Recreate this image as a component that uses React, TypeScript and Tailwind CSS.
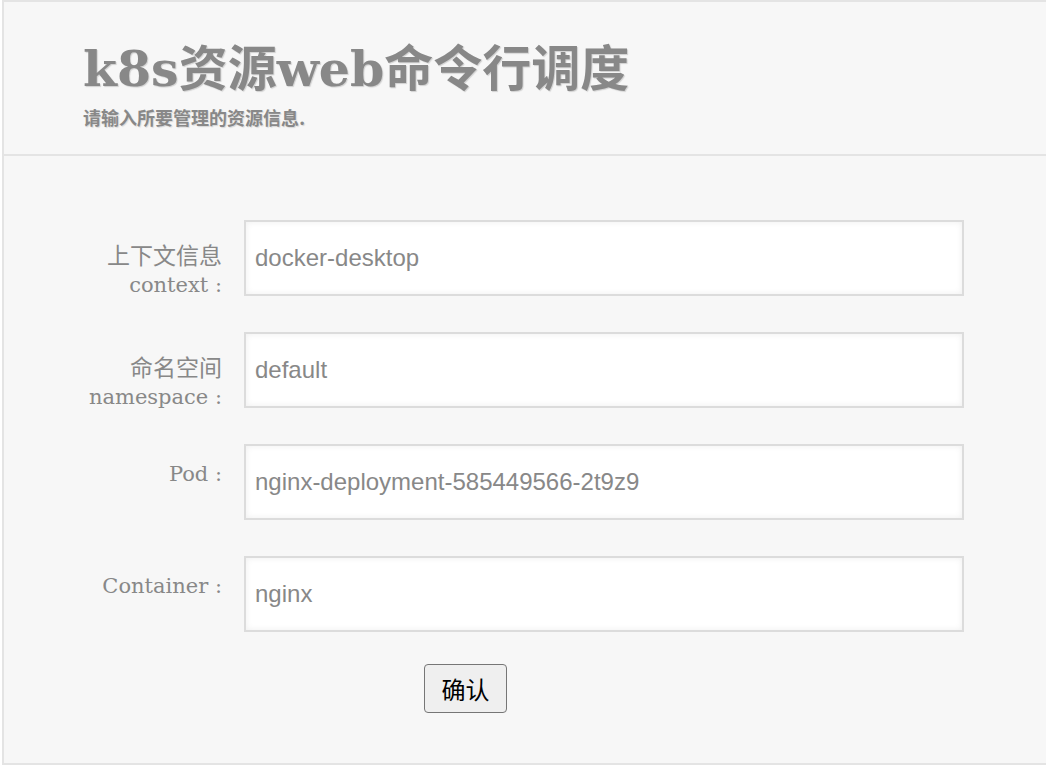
import { useState } from "react";

type Field = {
    key: string;
    cn?: string;
    en: string;
    value: string;
};

const fields: Field[] = [
    { key: "context", cn: "上下文信息", en: "context :", value: "docker-desktop" },
    { key: "namespace", cn: "命名空间", en: "namespace :", value: "default" },
    { key: "pod", en: "Pod :", value: "nginx-deployment-585449566-2t9z9" },
    { key: "container", en: "Container :", value: "nginx" },
];

const serif = "font-['DejaVu_Serif','Noto_Sans_CJK_SC',serif]";

const App = () => {
    const [values, setValues] = useState<Record<string, string>>(
        Object.fromEntries(fields.map((f) => [f.key, f.value]))
    );

    return (
        <div className="min-h-screen bg-white">
            <div className="ml-[2px] border-y-2 border-l-2 border-[#e4e4e4] bg-[#f7f7f7]">
                {/* header */}
                <div className="border-b-2 border-[#e4e4e4] pl-[79px] pt-[37px] pb-[23px]">
                    <h1 className={`${serif} text-[49px] font-bold leading-[60px] text-[#888] [text-shadow:1px_1px_1px_#d0d0d0]`}>
                        k8s资源web命令行调度
                    </h1>
                    <p className={`${serif} mt-[8px] text-[18px] font-semibold leading-[24px] text-[#888] [text-shadow:1px_1px_1px_#d8d8d8]`}>
                        请输入所要管理的资源信息.
                    </p>
                </div>

                {/* form */}
                <form
                    className="flex flex-col gap-[36px] pt-[64px] pb-[50px]"
                    onSubmit={(e) => e.preventDefault()}
                >
                    {fields.map((f) => (
                        <div key={f.key} className="flex h-[76px] items-start">
                            <label
                                htmlFor={f.key}
                                className={`${serif} w-[218px] shrink-0 text-right text-[#888] ${f.cn ? "pt-[22px]" : "pt-[16px]"}`}
                            >
                                {f.cn && <div className="text-[23px] leading-[29px]">{f.cn}</div>}
                                <div className="text-[21px] leading-[29px]">{f.en}</div>
                            </label>
                            <input
                                id={f.key}
                                value={values[f.key]}
                                onChange={(e) => setValues({ ...values, [f.key]: e.target.value })}
                                className="ml-[22px] h-[76px] w-[720px] border-2 border-[#dcdcdc] bg-white px-[9px] font-['Liberation_Sans',Arial,sans-serif] text-[24px] text-[#888] shadow-[inset_0_0_6px_rgba(0,0,0,0.07)] outline-none"
                            />
                        </div>
                    ))}

                    <div className="-mt-[4px] pl-[420px]">
                        <button
                            type="submit"
                            className="h-[49px] w-[83px] rounded-[4px] border border-[#767676] bg-[#efefef] font-['Noto_Sans_CJK_SC',sans-serif] text-[24px] text-black"
                        >
                            确认
                        </button>
                    </div>
                </form>
            </div>
        </div>
    );
};

export default App;
